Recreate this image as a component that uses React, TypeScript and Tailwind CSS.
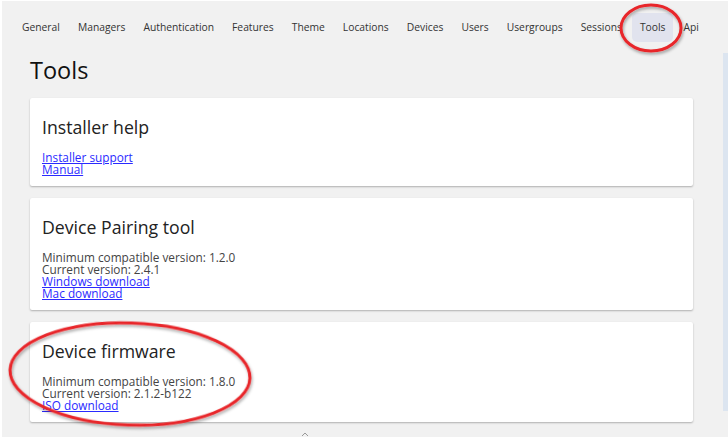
import React from "react";

const navItems = [
  "General",
  "Managers",
  "Authentication",
  "Features",
  "Theme",
  "Locations",
  "Devices",
  "Users",
  "Usergroups",
  "Sessions",
  "Tools",
  "Api",
];

function Card({ title, children }: { title: string; children: React.ReactNode }) {
  return (
    <div className="bg-white rounded-[2px] shadow-[0_1px_2px_rgba(0,0,0,0.28)] px-3 pt-[17px] pb-[11px]">
      <h2 className="text-[17.7px] leading-[24px] text-[#222] font-normal">{title}</h2>
      <div className="mt-3 text-[11.8px] leading-[12px] text-[#444]">{children}</div>
    </div>
  );
}

function A({ children }: { children: React.ReactNode }) {
  return (
    <div>
      <a href="#" className="text-[#2a2aff] underline">
        {children}
      </a>
    </div>
  );
}

export default function App() {
  return (
    <div
      className="relative w-[728px] h-[437px] overflow-hidden bg-[#f1f1f1] border-t border-l-2 border-white"
      style={{ fontFamily: '"Open Sans", "Noto Sans", sans-serif' }}
    >
      <nav className="flex items-center gap-[2px] pl-3 pt-[12px]">
        {navItems.map((n) => (
          <div
            key={n}
            className={
              "px-2 h-[29px] flex items-center rounded-[5px] text-[10.3px] text-[#333] whitespace-nowrap " +
              (n === "Tools" ? "bg-[#e1e3ee]" : "")
            }
          >
            {n}
          </div>
        ))}
      </nav>
      <div className="pl-[28px] pr-[35px]">
        <h1 className="mt-[12px] text-[23.5px] leading-[32px] text-[#111] font-normal">Tools</h1>
        <div className="mt-3 flex flex-col gap-[12px]">
          <Card title="Installer help">
            <A>Installer support</A>
            <A>Manual</A>
          </Card>
          <Card title="Device Pairing tool">
            <div>Minimum compatible version: 1.2.0</div>
            <div>Current version: 2.4.1</div>
            <A>Windows download</A>
            <A>Mac download</A>
          </Card>
          <Card title="Device firmware">
            <div>Minimum compatible version: 1.8.0</div>
            <div>Current version: 2.1.2-b122</div>
            <A>ISO download</A>
          </Card>
        </div>
      </div>
      <div className="absolute right-0 top-[52px] w-[5px] h-[358px] bg-[#dce5f0]" />
      <svg className="absolute left-[298px] top-[430px]" width="10" height="6" viewBox="0 0 10 6">
        <path d="M2 5 L5 2 L8 5" stroke="#999" strokeWidth="1" fill="none" />
      </svg>
      <svg className="absolute left-0 top-0 pointer-events-none" width="728" height="437" viewBox="0 0 728 437">
        <defs>
          <filter id="sh" x="-20%" y="-20%" width="140%" height="140%">
            <feDropShadow dx="1" dy="2" stdDeviation="1.5" floodColor="#000" floodOpacity="0.35" />
          </filter>
        </defs>
        <ellipse cx="649" cy="27" rx="30" ry="23" fill="none" stroke="#e8262a" strokeWidth="3" filter="url(#sh)" />
        <ellipse cx="128" cy="373" rx="120" ry="51" fill="none" stroke="#e8262a" strokeWidth="3" filter="url(#sh)" transform="rotate(2 128 373)" />
      </svg>
    </div>
  );
}
